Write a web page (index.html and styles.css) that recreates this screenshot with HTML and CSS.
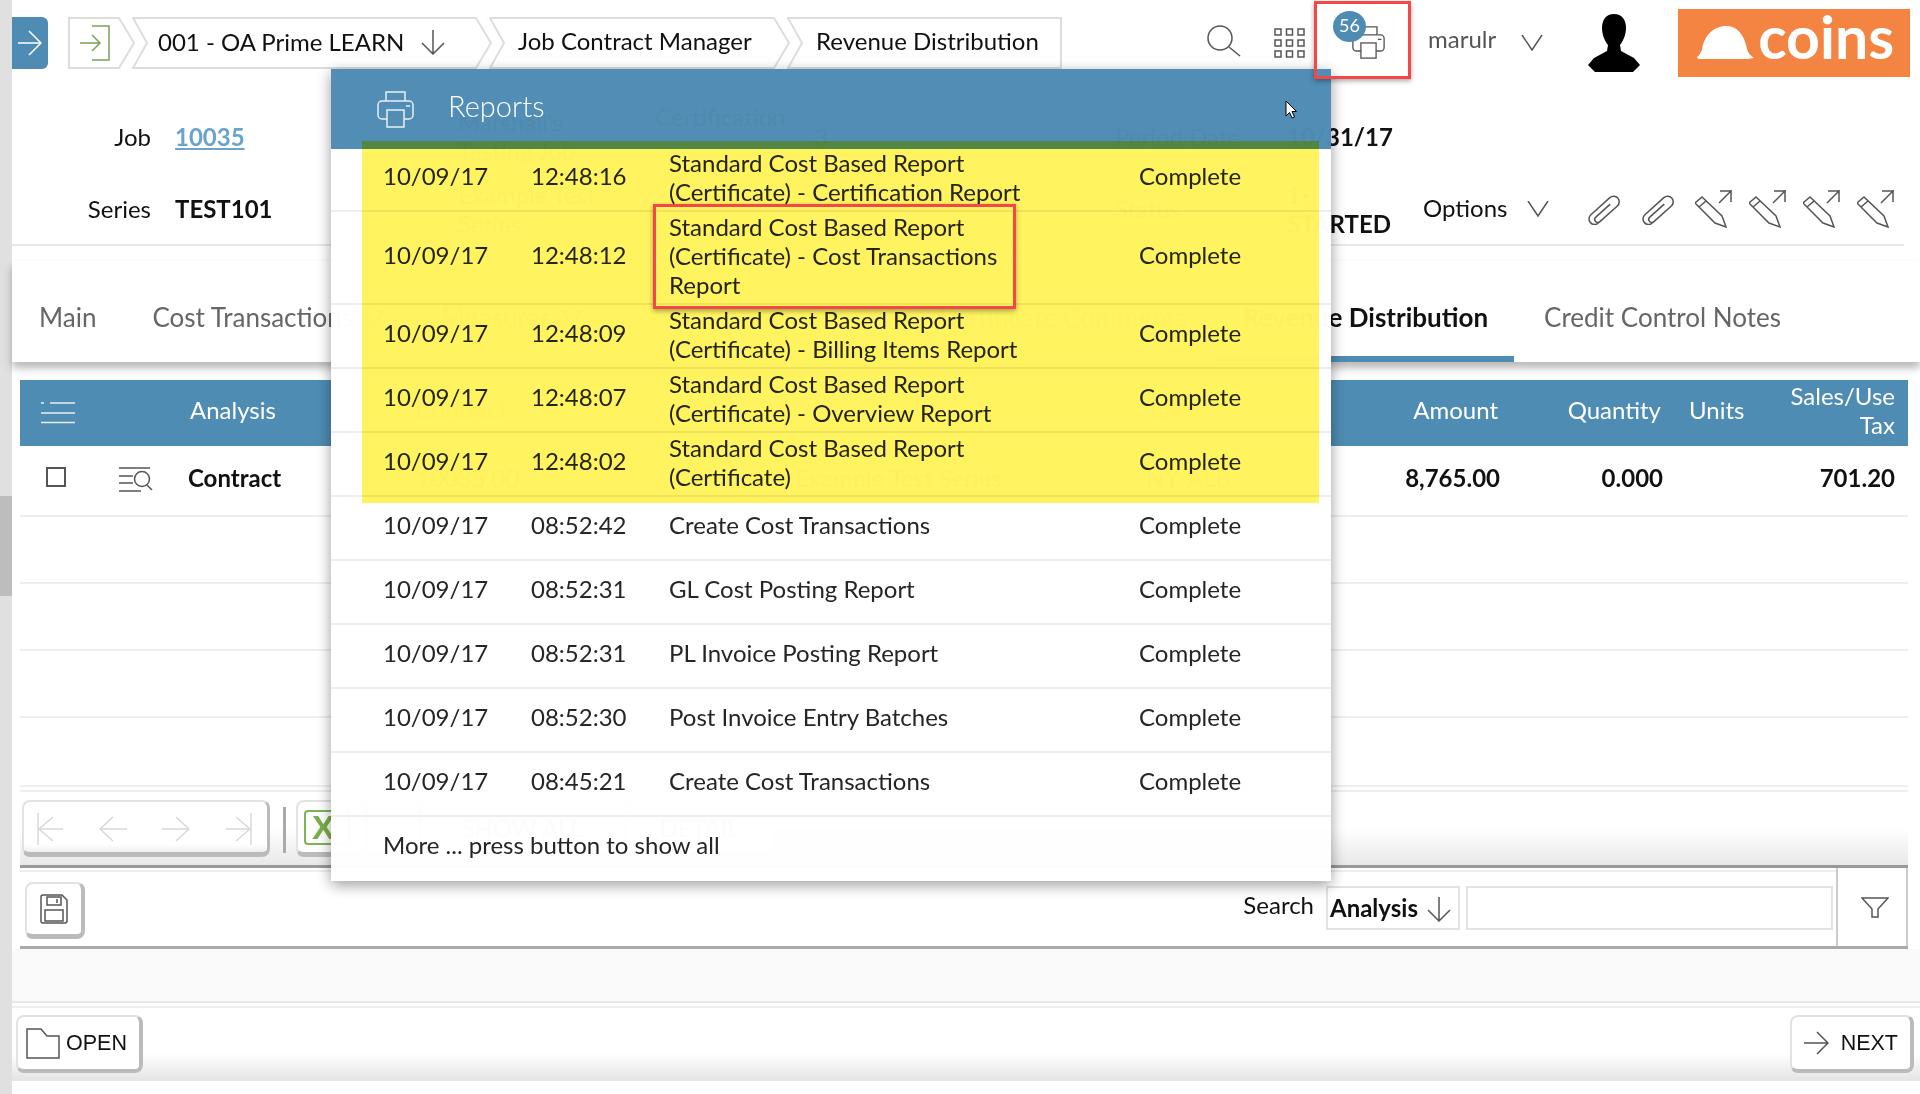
FILE: index.html
```html
<!DOCTYPE html>
<html lang="en">
<head>
  <meta charset="UTF-8">
  <title>Revenue Distribution</title>
  <link rel="stylesheet" href="styles.css">
</head>
<body>
  <svg class="sprites" width="0" height="0">
    <symbol id="printer" viewBox="0 0 37 37"><path d="M9 10V1H28V10"/><rect x="1" y="10" width="35" height="18" rx="4"/><rect class="paper" x="10" y="19" width="17" height="17"/><path d="M29 15H33"/></symbol>
    <symbol id="chev" viewBox="0 0 22 16"><path d="M1 0L11 15L21 0"/></symbol>
    <symbol id="down" viewBox="0 0 24 25"><path d="M12 0V24M1 13L12 24L23 13"/></symbol>
    <symbol id="clip" viewBox="0 0 35 30" overflow="visible"><g transform="translate(17.500 15) rotate(48) scale(1.020) translate(-7.500 -19)"><path d="M7 11V30a3 3 0 0 0 6 0V7a5.500 5.500 0 0 0 -11 0V32a5.500 5.500 0 0 0 11 0"/></g></symbol>
    <symbol id="pencil" viewBox="0 0 37 38"><path d="M0 13L7 7L27 26L31 37L20 33ZM4 17L11 11M24 13L37 0M25 1H36V12"/></symbol>
    <symbol id="first" viewBox="0 0 26 32"><path d="M1 0V32M26 16H2M16 4L2 16L16 28"/></symbol>
    <symbol id="prev" viewBox="0 0 28 26"><path d="M28 13H1M14 1L1 13L14 25"/></symbol>
    <symbol id="next" viewBox="0 0 28 26"><path d="M0 13H27M14 1L27 13L14 25"/></symbol>
    <symbol id="last" viewBox="0 0 26 32"><path d="M25 0V32M0 16H24M10 4L24 16L10 28"/></symbol>
  </svg>

  <div class="scrollbar"><div class="scrollbar-thumb"></div></div>

  <div class="page">
    <header class="topbar">
      <button class="nav-toggle">
        <svg class="toggle-arrow" viewBox="0 0 24 28"><path d="M0 14H23M11 2L23 14L11 26"/></svg>
      </button>
      <nav class="crumbs">
        <div class="crumb crumb-home">
          <svg class="crumb-shape" width="67" height="52"><path d="M1 1H51L66 26L51 51H1Z"/></svg>
          <svg class="enter-icon" viewBox="0 0 30 36"><path d="M0 18H20M12 10L20 18L12 26M12 1H29V35H12"/></svg>
        </div>
        <div class="crumb crumb-company">
          <svg class="crumb-shape" width="360" height="52"><path d="M1 1H344L359 26L344 51H1L15 26Z"/></svg>
          <span>001 - OA Prime LEARN</span>
          <svg class="ic ic-crumb-down"><use href="#down"/></svg>
        </div>
        <div class="crumb crumb-module">
          <svg class="crumb-shape" width="301" height="52"><path d="M1 1H285L300 26L285 51H1L15 26Z"/></svg>
          <span>Job Contract Manager</span>
        </div>
        <div class="crumb crumb-page">
          <svg class="crumb-shape" width="275" height="52"><path d="M1 1H274V51H1L15 26Z"/></svg>
          <span>Revenue Distribution</span>
        </div>
      </nav>
      <svg class="ic ic-search" viewBox="0 0 34 32"><circle cx="13" cy="13" r="12"/><path d="M22 22L33 31"/></svg>
      <svg class="ic ic-apps" viewBox="0 0 31 30">
        <rect x="1" y="1" width="6" height="6"/><rect x="12.500" y="1" width="6" height="6"/><rect x="24" y="1" width="6" height="6"/>
        <rect x="1" y="12" width="6" height="6"/><rect x="12.500" y="12" width="6" height="6"/><rect x="24" y="12" width="6" height="6"/>
        <rect x="1" y="23" width="6" height="6"/><rect x="12.500" y="23" width="6" height="6"/><rect x="24" y="23" width="6" height="6"/>
      </svg>
      <div class="report-btn">
        <svg class="ic ic-top-printer"><use href="#printer"/></svg>
        <span class="badge">56</span>
      </div>
      <span class="username">marulr</span>
      <svg class="ic ic-user-chev"><use href="#chev"/></svg>
      <svg class="avatar" viewBox="0 0 52 58"><path d="M26 0C34 0 38 6 38 14C38 21 35 27 32 31L33 37L46 44L52 51L45 58H7L0 51L6 44L19 37L20 31C17 27 14 21 14 14C14 6 18 0 26 0Z"/></svg>
      <div class="logo">
        <svg class="helmet" viewBox="0 0 57 33"><path d="M0 31C3 29 3 27 5 24C7 9 17 0 29 0C40 0 47 8 50 23C51 27 53 29 57 32L50 33H1Z"/></svg>
        <span>coins</span>
      </div>
    </header>

    <section class="job-form">
      <label>Job</label><a class="job-link">10035</a>
      <span class="job-name">Marshall's<br>Testing Job</span>
      <span class="job-type">Certification</span>
      <span class="job-no">3</span>
      <label class="label-wide">Period Date</label><b class="form-date">10/31/17</b>
      <span></span>

      <label>Series</label><b>TEST101</b>
      <span class="job-name">Example Test<br>Series</span>
      <span></span><span></span>
      <label class="label-wide">Status</label><b class="form-status">1-<br>STARTED</b>
      <div class="options">
        <span>Options</span>
        <svg class="ic ic-opt-chev"><use href="#chev"/></svg>
        <svg class="ic ic-clip"><use href="#clip"/></svg>
        <svg class="ic ic-clip"><use href="#clip"/></svg>
        <svg class="ic ic-pencil"><use href="#pencil"/></svg>
        <svg class="ic ic-pencil"><use href="#pencil"/></svg>
        <svg class="ic ic-pencil"><use href="#pencil"/></svg>
        <svg class="ic ic-pencil"><use href="#pencil"/></svg>
      </div>
    </section>

    <nav class="tabs">
      <a class="tab">Main</a>
      <a class="tab">Cost Transactions <svg class="ic ic-tab-chev"><use href="#chev"/></svg></a>
      <a class="tab">Measures <svg class="ic ic-tab-chev"><use href="#chev"/></svg></a>
      <a class="tab tab-push">Certificate Comments</a>
      <a class="tab tab-active">Revenue Distribution</a>
      <a class="tab">Credit Control Notes</a>
    </nav>

    <section class="grid">
      <div class="grid-row grid-head">
        <svg class="menu-icon" viewBox="0 0 34 22"><path d="M0 1H3M9 1H34M0 11H34M0 20.500H34"/></svg>
        <span class="col-analysis">Analysis</span>
        <span class="col-hidden">Contract</span>
        <span></span>
        <span class="col-hidden">Tax</span>
        <span class="num num-head">Amount</span>
        <span class="num num-head">Quantity</span>
        <span class="col-units">Units</span>
        <span class="num">Sales/Use Tax</span>
      </div>
      <div class="grid-row grid-data">
        <span class="checkbox"></span>
        <svg class="ic ic-detail" viewBox="0 0 34 25"><path d="M0 1H31M0 9H14M0 16H14M0 24H22M28 18L33 23"/><circle cx="23" cy="12" r="7.500"/></svg>
        <b>Contract</b>
        <span>10035.00</span>
        <span>Example Test Series</span>
        <span>NY-ALB</span>
        <b class="num">8,765.00</b>
        <b class="num">0.000</b>
        <span></span>
        <b class="num">701.20</b>
      </div>
      <div class="grid-blank"></div>
      <div class="grid-blank"></div>
      <div class="grid-blank"></div>
      <div class="grid-end"></div>

      <div class="toolbar">
        <div class="pager">
          <svg class="ic ic-pg"><use href="#first"/></svg>
          <svg class="ic ic-pg"><use href="#prev"/></svg>
          <svg class="ic ic-pg"><use href="#next"/></svg>
          <svg class="ic ic-pg"><use href="#last"/></svg>
        </div>
        <span class="tool-sep"></span>
        <div class="tool-btn excel-btn"><span class="excel-x">X</span></div>
        <div class="tool-btn print-btn"></div>
        <div class="tool-btn show-btn">SHOW ALL</div>
        <div class="tool-btn detail-btn">DETAIL</div>
      </div>

      <div class="search-panel">
        <div class="search-main">
          <button class="save-btn">
            <svg class="ic ic-save" viewBox="0 0 28 30"><path d="M3 1H22L27 6V27Q27 29 25 29H3Q1 29 1 27V3Q1 1 3 1Z"/><rect x="7" y="3" width="14" height="8"/><path d="M17 5V9"/><rect x="5" y="16" width="18" height="11"/></svg>
          </button>
          <span class="search-label">Search</span>
          <div class="search-select">
            <b>Analysis</b>
            <svg class="ic ic-select"><use href="#down"/></svg>
          </div>
          <div class="search-input"></div>
        </div>
        <div class="filter-cell">
          <svg class="ic ic-filter" viewBox="0 0 28 21"><path d="M1 1H27L17 12V20H11V12Z"/></svg>
        </div>
      </div>
    </section>

    <div class="page-gap"></div>

    <footer class="footer">
      <button class="foot-btn">
        <svg class="ic ic-folder" viewBox="0 0 34 31"><path d="M1 30V1H15L21 8H33V30Z"/></svg>
        OPEN
      </button>
      <button class="foot-btn">
        <svg class="ic ic-next" viewBox="0 0 25 24"><path d="M0 12H24M13 1L24 12L13 23"/></svg>
        NEXT
      </button>
    </footer>
  </div>

  <!-- reports popup -->
  <div class="reports">
    <div class="reports-head">
      <svg class="ic ic-reports"><use href="#printer"/></svg>
      <span>Reports</span>
    </div>
    <div class="report-row"><span>10/09/17</span><span>12:48:16</span><span>Standard Cost Based Report (Certificate) - Certification Report</span><span>Complete</span></div>
    <div class="report-row"><span>10/09/17</span><span>12:48:12</span><span>Standard Cost Based Report (Certificate) - Cost Transactions Report</span><span>Complete</span></div>
    <div class="report-row"><span>10/09/17</span><span>12:48:09</span><span>Standard Cost Based Report (Certificate) - Billing Items Report</span><span>Complete</span></div>
    <div class="report-row"><span>10/09/17</span><span>12:48:07</span><span>Standard Cost Based Report (Certificate) - Overview Report</span><span>Complete</span></div>
    <div class="report-row"><span>10/09/17</span><span>12:48:02</span><span>Standard Cost Based Report (Certificate)</span><span>Complete</span></div>
    <div class="report-row report-single"><span>10/09/17</span><span>08:52:42</span><span>Create Cost Transactions</span><span>Complete</span></div>
    <div class="report-row report-single"><span>10/09/17</span><span>08:52:31</span><span>GL Cost Posting Report</span><span>Complete</span></div>
    <div class="report-row report-single"><span>10/09/17</span><span>08:52:31</span><span>PL Invoice Posting Report</span><span>Complete</span></div>
    <div class="report-row report-single"><span>10/09/17</span><span>08:52:30</span><span>Post Invoice Entry Batches</span><span>Complete</span></div>
    <div class="report-row report-single"><span>10/09/17</span><span>08:45:21</span><span>Create Cost Transactions</span><span>Complete</span></div>
    <div class="reports-more">More ... press button to show all</div>
  </div>

  <!-- screenshot annotations -->
  <div class="mark-yellow"></div>
  <div class="mark-red mark-printer"></div>
  <div class="mark-red mark-row"></div>
  <svg class="cursor" viewBox="0 0 12 19"><path d="M1 1V16L4.500 12.500L7 18L9.500 17L7 11.500H11.500Z"/></svg>
</body>
</html>
```

FILE: styles.css
```css
html, body {
  margin: 0;
  height: 1094px;
  overflow: hidden;
}
body {
  display: flex;
  position: relative;
  background: #fff;
  font-family: Lato, "Liberation Sans", sans-serif;
  font-size: 24px;
  line-height: 29px;
  color: #111;
}
.sprites {
  position: absolute;
}
button {
  font: inherit;
  padding: 0;
}

/* icons */
.ic {
  display: block;
  flex: none;
  fill: none;
  stroke: #555;
  stroke-width: 1.5;
  --paper: #fff;
}
.paper {
  fill: var(--paper);
}

.scrollbar {
  width: 12px;
  flex: none;
  background: #e0e0e0;
}
.scrollbar-thumb {
  height: 100px;
  margin-top: 496px;
  background: #bdbdbd;
}
.page {
  flex: 1;
  min-width: 0;
  display: flex;
  flex-direction: column;
}

/* top bar */
.topbar {
  display: flex;
  align-items: center;
  height: 53px;
  padding-top: 16px;
}
.nav-toggle {
  width: 36px;
  height: 52px;
  margin-right: 20px;
  border: 0;
  border-radius: 0 6px 6px 0;
  background: #4f8cb3;
  display: flex;
  align-items: center;
  justify-content: center;
}
.toggle-arrow {
  width: 24px;
  height: 28px;
  fill: none;
  stroke: #fff;
  stroke-width: 1.5;
}
.crumbs {
  display: flex;
}
.crumb {
  position: relative;
  display: flex;
  align-items: center;
  height: 52px;
  margin-left: -3px;
  white-space: nowrap;
}
.crumb-shape {
  position: absolute;
  left: 0;
  top: 0;
  fill: #fff;
  stroke: #ddd;
  stroke-width: 2;
}
.crumb > span,
.crumb > .enter-icon,
.crumb > .ic {
  position: relative;
}
.crumb > span {
  margin-top: -4px;
}
.crumb-home {
  width: 67px;
  margin-left: 0;
}
.crumb-company {
  width: 360px;
  padding-left: 26px;
  box-sizing: border-box;
}
.crumb-company > span {
  margin-top: -2px;
}
.crumb-module {
  width: 301px;
  padding-left: 29px;
  box-sizing: border-box;
}
.crumb-page {
  width: 275px;
  padding-left: 29px;
  box-sizing: border-box;
}
.enter-icon {
  width: 30px;
  height: 36px;
  margin-left: 12px;
  fill: none;
  stroke: #7aa35a;
  stroke-width: 1.5;
}
.ic-crumb-down {
  width: 24px;
  height: 25px;
  margin-left: 17px;
  margin-top: -1px;
}
.ic-search {
  width: 34px;
  height: 32px;
  margin-left: 145px;
  margin-top: -3px;
}
.ic-apps {
  width: 31px;
  height: 30px;
  margin-left: 33px;
}
.report-btn {
  position: relative;
  margin-left: 47px;
}
.ic-top-printer {
  width: 33px;
  height: 33px;
}
.badge {
  position: absolute;
  left: -19px;
  top: -15px;
  width: 33px;
  height: 31px;
  border-radius: 50%;
  background: #4f8cb3;
  color: #fff;
  font-size: 18px;
  line-height: 29px;
  text-align: center;
}
.username {
  margin-left: 43px;
  margin-top: -8px;
  color: #555;
}
.ic-user-chev {
  width: 22px;
  height: 16px;
  margin-left: 25px;
}
.avatar {
  width: 52px;
  height: 58px;
  flex: none;
  margin-left: 45px;
  fill: #000;
}
.logo {
  display: flex;
  align-items: center;
  flex: none;
  width: 232px;
  height: 68px;
  margin-left: 38px;
  background: #f38442;
  color: #fff;
}
.helmet {
  width: 57px;
  height: 33px;
  margin-left: 19px;
  fill: #fff;
}
.logo span {
  margin-left: 4px;
  font-size: 59px;
  font-weight: 700;
  line-height: 60px;
  margin-top: -11px;
}

/* job form */
.job-form {
  display: grid;
  grid-template-columns: 139px 307px 197px 159px 301px 173px 135px 1fr;
  grid-template-rows: 72px 73px;
  align-items: center;
  height: 144px;
  margin: 0 16px 0 0;
  padding-top: 31px;
  border-bottom: 2px solid #e8e8e8;
}
.job-form label {
  text-align: right;
}
.job-form .label-wide {
  text-align: left;
}
.job-link {
  margin-left: 24px;
  color: #6aa3cc;
  font-weight: 700;
  text-decoration: underline;
}
.job-form > b {
  margin-left: 24px;
}
.job-form > .form-date,
.job-form > .form-status {
  margin-left: -1px;
}
.job-type {
  padding-bottom: 40px;
}
.options {
  display: flex;
  align-items: center;
  width: 480px;
}
.options span {
  margin-top: -2px;
}
.ic-opt-chev {
  width: 22px;
  height: 16px;
  margin-left: 20px;
  margin-right: 38px;
}
.ic-clip {
  width: 35px;
  height: 30px;
  margin-right: 19px;
  margin-top: 2px;
}
.ic-pencil {
  width: 37px;
  height: 38px;
  margin-right: 17px;
  margin-top: 1px;
}

/* tabs */
.tabs {
  display: flex;
  height: 101px;
  margin-top: 15px;
  padding-right: 111px;
  box-shadow: 0 6px 8px rgba(0, 0, 0, .28);
  background: #fff;
  font-size: 26px;
}
.tab {
  display: flex;
  align-items: center;
  gap: 10px;
  padding: 18px 28px 0;
  color: #666;
  white-space: nowrap;
  border-bottom: 6px solid transparent;
}
.tab:first-child {
  margin-left: -1px;
}
.tab-push {
  margin-left: auto;
}
.tab-active {
  margin-right: 2px;
  padding-right: 26px;
  color: #111;
  font-weight: 700;
  border-bottom-color: #4f8cb3;
}
.ic-tab-chev {
  width: 22px;
  height: 16px;
}

/* grid */
.grid {
  margin: 18px 12px 0 8px;
}
.grid-row {
  display: grid;
  grid-template-columns: 85px 83px 228px 379px 351px 154px 200px 163px 107px 125px;
  align-items: center;
  box-sizing: border-box;
  padding-bottom: 7px;
}
.grid-head {
  height: 66px;
  background: linear-gradient(90deg, #4f8cb3 311px, #fff 311px, #fff 1311px, #4f8cb3 1311px);
  color: #fff;
}
.col-analysis {
  padding-left: 2px;
}
.col-hidden {
  color: #888;
}
.menu-icon {
  grid-column: 1 / 3;
  width: 34px;
  height: 22px;
  margin-left: 21px;
  margin-top: 7px;
  fill: none;
  stroke: #e6eef4;
  stroke-width: 1.500;
}
.num {
  text-align: right;
}
.num-head {
  padding-right: 2px;
}
.col-units {
  padding-left: 26px;
}
.grid-data {
  height: 71px;
  border-bottom: 2px solid #eee;
}
.checkbox {
  width: 16px;
  height: 16px;
  margin-left: 26px;
  border: 2px solid #555;
}
.ic-detail {
  width: 34px;
  height: 25px;
  margin-left: 14px;
  margin-top: 4px;
}
.grid-blank {
  height: 65px;
  border-bottom: 2px solid #eee;
}
.grid-end {
  height: 67px;
  border-bottom: 2px solid #eee;
}

/* toolbar */
.toolbar {
  display: flex;
  height: 65px;
  padding: 8px 0 0 2px;
  margin-top: 3px;
  border-top: 2px solid #eee;
  border-bottom: 3px solid #999;
  background: linear-gradient(#fff 50%, #e8e8e8);
}
.pager {
  display: flex;
  align-items: center;
  justify-content: space-between;
  box-sizing: border-box;
  width: 248px;
  height: 57px;
  padding: 4px 14px 0 12px;
  border: 2px solid #e2e2e2;
  border-right: 3px solid #bbb;
  border-bottom: 5px solid #bbb;
  border-radius: 8px;
  background: linear-gradient(#fff 85%, #efefef);
}
.ic-pg {
  width: 28px;
  height: 32px;
  stroke: #d8d8d8;
}
.tool-sep {
  width: 3px;
  height: 46px;
  margin: 7px 10px 0 13px;
  background: #aaa;
}
.tool-btn {
  display: flex;
  align-items: center;
  justify-content: center;
  box-sizing: border-box;
  height: 57px;
  border: 2px solid #e2e2e2;
  border-bottom: 5px solid #bbb;
  border-radius: 8px;
  background: #fff;
  color: #555;
}
.excel-btn {
  width: 70px;
  justify-content: flex-start;
  padding-left: 6px;
}
.excel-x {
  width: 46px;
  height: 35px;
  box-sizing: border-box;
  border: 2px solid #7ab55c;
  border-radius: 4px;
  padding-left: 6px;
  color: #78b04a;
  font: 700 34px/31px "Liberation Sans", sans-serif;
}
.print-btn {
  width: 53px;
}
.show-btn {
  width: 206px;
}
.detail-btn {
  width: 149px;
}

/* search panel */
.search-panel {
  display: flex;
  height: 78px;
  border-bottom: 3px solid #aaa;
}
.search-main {
  flex: 1;
  display: flex;
  align-items: flex-start;
  margin-top: 2px;
  padding: 8px 3px 0 5px;
  border-top: 2px solid #eee;
}
.save-btn {
  display: flex;
  align-items: center;
  justify-content: center;
  box-sizing: border-box;
  width: 60px;
  height: 57px;
  margin-top: 2px;
  border: 2px solid #e2e2e2;
  border-right: 4px solid #bbb;
  border-bottom: 5px solid #bbb;
  border-radius: 8px;
  background: #fff;
}
.ic-save {
  width: 28px;
  height: 30px;
}
.search-label {
  margin-left: auto;
  margin-top: 10px;
}
.search-select {
  display: flex;
  align-items: center;
  box-sizing: border-box;
  width: 134px;
  height: 44px;
  margin: 6px 6px 0 12px;
  padding-left: 2px;
  border: 2px solid #e2e2e2;
}
.search-select b {
  margin-top: -2px;
}
.ic-select {
  width: 24px;
  height: 25px;
  margin-left: 9px;
  margin-top: 3px;
}
.search-input {
  box-sizing: border-box;
  width: 367px;
  height: 44px;
  margin-top: 6px;
  border: 2px solid #e2e2e2;
}
.filter-cell {
  box-sizing: border-box;
  width: 72px;
  padding: 29px 0 0 23px;
  border: solid #ccc;
  border-width: 0 2px 0 2px;
}
.ic-filter {
  width: 28px;
  height: 21px;
}

/* bottom */
.page-gap {
  height: 52px;
  background: #fafafa;
}
.footer {
  display: flex;
  justify-content: space-between;
  box-sizing: border-box;
  height: 80px;
  padding: 12px 6px 0 4px;
  border-top: 2px solid #e8e8e8;
  box-shadow: inset 0 3px 0 #fff, inset 0 5px 0 #eee;
  background: linear-gradient(#fff 65%, #e4e4e4);
}
.foot-btn {
  display: flex;
  align-items: center;
  box-sizing: border-box;
  height: 58px;
  padding: 0 12px 0 8px;
  border: 2px solid #e2e2e2;
  border-right: 4px solid #bbb;
  border-bottom: 4px solid #bbb;
  border-radius: 8px;
  background: #fff;
  color: #111;
  font: 21.500px "Liberation Sans", sans-serif;
}
.ic-folder {
  width: 34px;
  height: 31px;
  margin-right: 6px;
}
.ic-next {
  width: 25px;
  height: 24px;
  margin-right: 12px;
  margin-left: 4px;
}

/* reports popup */
.reports {
  position: absolute;
  left: 331px;
  top: 69px;
  width: 1000px;
  height: 812px;
  box-sizing: border-box;
  background: #fff;
  opacity: .985;
  box-shadow: 0 4px 14px rgba(0, 0, 0, .4);
}
.reports-head {
  display: flex;
  align-items: center;
  height: 80px;
  margin-bottom: -1px;
  padding-left: 46px;
  background: #4f8cb3;
  color: #fff;
  font-size: 29px;
  font-weight: 300;
}
.ic-reports {
  width: 37px;
  height: 37px;
  margin-right: 34px;
  stroke: #e8f0f5;
  --paper: #4f8cb3;
}
.reports-head span {
  margin-top: -7px;
}
.report-row {
  position: relative;
  display: grid;
  grid-template-columns: 148px 138px 470px 1fr;
  align-items: center;
  min-height: 58px;
  padding: 0 0 4px 52px;
  border-bottom: 2px solid #eee;
  color: #222;
}
.report-row span {
  padding-bottom: 3px;
}
.report-row span:nth-child(3) {
  width: 360px;
  padding-bottom: 0;
}
.report-single span:nth-child(3) {
  padding-bottom: 3px;
}
.reports-more {
  padding: 13px 0 0 52px;
  color: #222;
}

/* annotations */
.mark-yellow {
  position: absolute;
  left: 362px;
  top: 141px;
  width: 957px;
  height: 362px;
  background: #fff45f;
  mix-blend-mode: multiply;
}
.mark-red {
  position: absolute;
  box-sizing: border-box;
  border: 3px solid #f44848;
  box-shadow: 0 2px 5px rgba(0, 0, 0, .35);
}
.mark-printer {
  left: 1314px;
  top: 1px;
  width: 97px;
  height: 78px;
}
.mark-row {
  left: 653px;
  top: 204px;
  width: 363px;
  height: 105px;
}
.cursor {
  position: absolute;
  left: 1285px;
  top: 100px;
  width: 12px;
  height: 19px;
  fill: #fff;
  stroke: #000;
  stroke-width: 1;
}
```
